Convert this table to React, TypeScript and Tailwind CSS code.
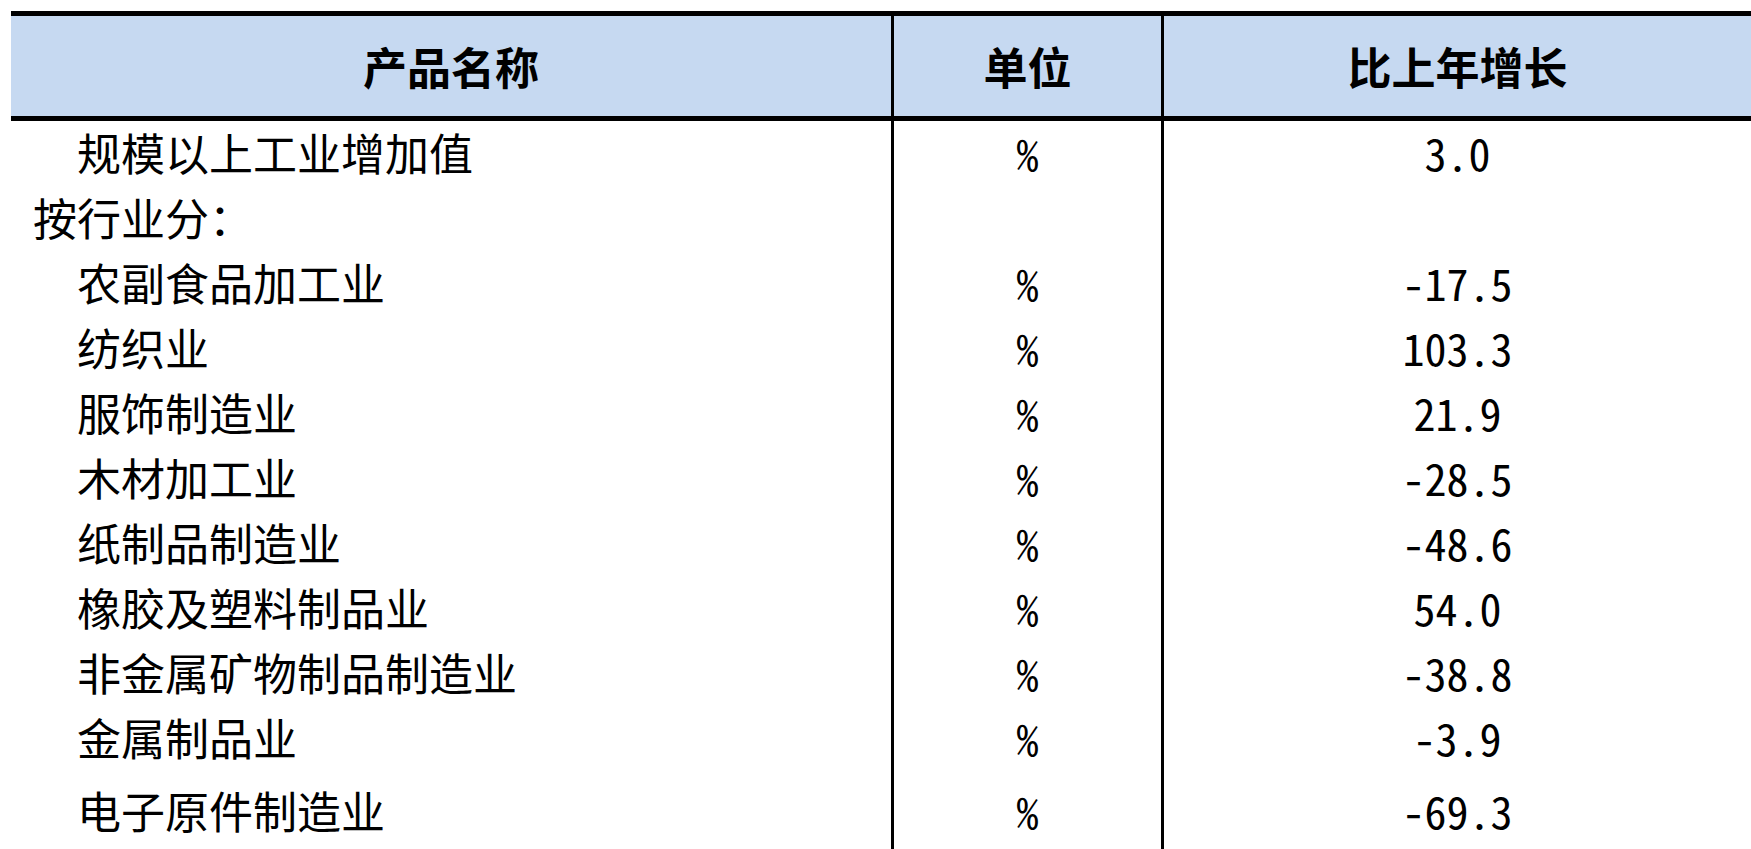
import React from "react";

const rows: { name: string; unit?: string; value?: string; group?: boolean }[] = [
  { name: "规模以上工业增加值", unit: "%", value: "3.0" },
  { name: "按行业分：", group: true },
  { name: "农副食品加工业", unit: "%", value: "-17.5" },
  { name: "纺织业", unit: "%", value: "103.3" },
  { name: "服饰制造业", unit: "%", value: "21.9" },
  { name: "木材加工业", unit: "%", value: "-28.5" },
  { name: "纸制品制造业", unit: "%", value: "-48.6" },
  { name: "橡胶及塑料制品业", unit: "%", value: "54.0" },
  { name: "非金属矿物制品制造业", unit: "%", value: "-38.8" },
  { name: "金属制品业", unit: "%", value: "-3.9" },
  { name: "电子原件制造业", unit: "%", value: "-69.3" },
];

const cjk = "font-['SimSun','Noto_Sans_CJK_SC',sans-serif]";
const mono = "font-['Noto_Sans_Mono_CJK_SC','Liberation_Mono',monospace]";

export default function App() {
  return (
    <div className="h-[849px] w-[1751px] overflow-hidden bg-white pt-[11px] pl-[11px] text-black">
      <div className="w-[1740px]">
        <div
          className={`grid h-[110px] grid-cols-[880px_270px_590px] border-y-[5px] border-black bg-[#c6d9f1] text-[44px] font-bold ${cjk}`}
        >
          <div className="flex items-center justify-center">产品名称</div>
          <div className="flex items-center justify-center border-l-[3px] border-black">单位</div>
          <div className="flex items-center justify-center border-l-[3px] border-black">比上年增长</div>
        </div>

        {rows.map((r, i) => {
          const last = i === rows.length - 1;
          const pad = last ? "pb-[12px]" : "pb-[4px]";
          return (
            <div
              key={r.name}
              className={`grid grid-cols-[880px_270px_590px] text-[44px] leading-none ${last ? "h-[90px]" : "h-[65px]"}`}
            >
              <div className={`flex items-center ${cjk} ${pad} ${r.group ? "pl-[22px]" : "pl-[66px]"}`}>
                {r.name}
              </div>
              <div className={`flex items-center justify-center border-l-[3px] border-black ${mono} ${pad}`}>
                {r.unit ?? ""}
              </div>
              <div className={`flex items-center justify-center border-l-[3px] border-black ${mono} ${pad}`}>
                {r.value ?? ""}
              </div>
            </div>
          );
        })}
      </div>
    </div>
  );
}
